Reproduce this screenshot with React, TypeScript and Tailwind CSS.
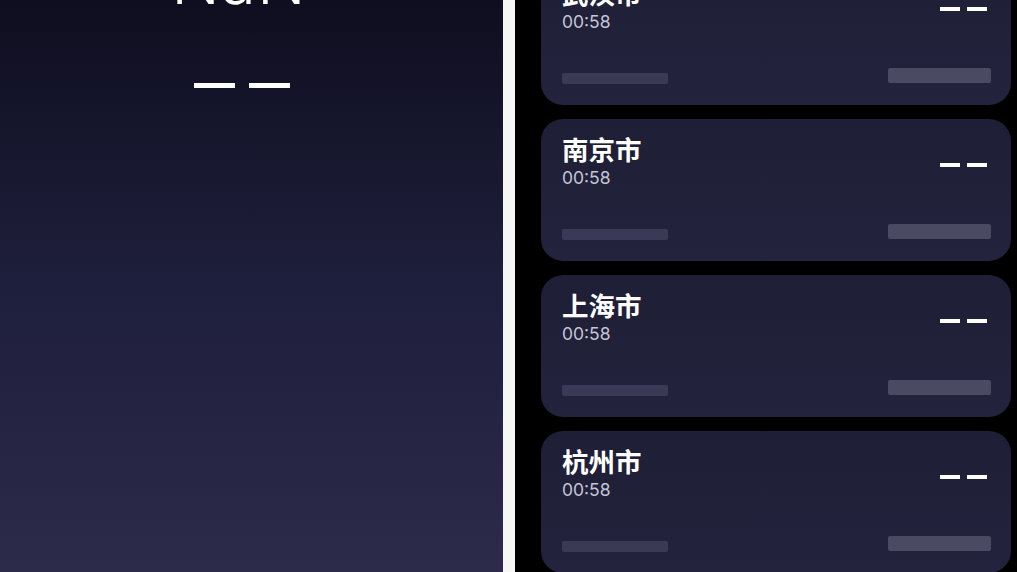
import React from "react";

const cities = ["武汉市", "南京市", "上海市", "杭州市"];

function Card({ name }: { name: string }) {
  return (
    <div className="h-[142px] shrink-0 rounded-[22px] bg-gradient-to-b from-[#1e1e36] to-[#28284300] bg-[#23233d] pl-[21px] pr-[20px] pt-[15px] pb-[21px] flex flex-col justify-between">
      <div className="flex justify-between items-start">
        <div className="flex flex-col">
          <div
            className="text-[26.5px] leading-[30px] font-bold text-white"
            style={{ fontFamily: '"Noto Sans CJK SC", sans-serif' }}
          >
            {name}
          </div>
          <div
            className="text-[17.5px] leading-[20px] mt-[4px] text-[#c4c5d6]"
            style={{ fontFamily: 'Inter, "Noto Sans", sans-serif' }}
          >
            00:58
          </div>
        </div>
        <div className="flex gap-[7px] mt-[29px] mr-[4px]">
          <div className="w-[20px] h-[4px] bg-white" />
          <div className="w-[20px] h-[4px] bg-white" />
        </div>
      </div>
      <div className="flex justify-between items-end">
        <div className="w-[106px] h-[11px] rounded-[2px] bg-[#3a3a57]" />
        <div className="w-[103px] h-[15px] rounded-[2px] bg-[#4a4a62] mb-[1px]" />
      </div>
    </div>
  );
}

export default function App() {
  return (
    <div className="flex w-[1017px] h-[572px] overflow-hidden bg-black">
      <div className="w-[503px] h-full shrink-0 bg-gradient-to-b from-[#0f0e20] via-[#1e1f3c] to-[#2c2b4a] flex flex-col items-center pr-[19px]">
        <div
          className="text-[64px] leading-[64px] font-light tracking-[1px] text-white mt-[-51px] pl-[24px]"
          style={{ fontFamily: 'Inter, "Noto Sans", sans-serif' }}
        >
          NaN°
        </div>
        <div className="flex gap-[14px] mt-[70px]">
          <div className="w-[41px] h-[5px] bg-white" />
          <div className="w-[41px] h-[5px] bg-white" />
        </div>
      </div>
      <div className="w-[12px] h-full shrink-0 bg-[#f6f6f6]" />
      <div className="flex-1 h-full bg-black pl-[26px] pr-[6px] flex flex-col gap-[14px] mt-[-37px]">
        {cities.map((c) => (
          <Card key={c} name={c} />
        ))}
      </div>
    </div>
  );
}
